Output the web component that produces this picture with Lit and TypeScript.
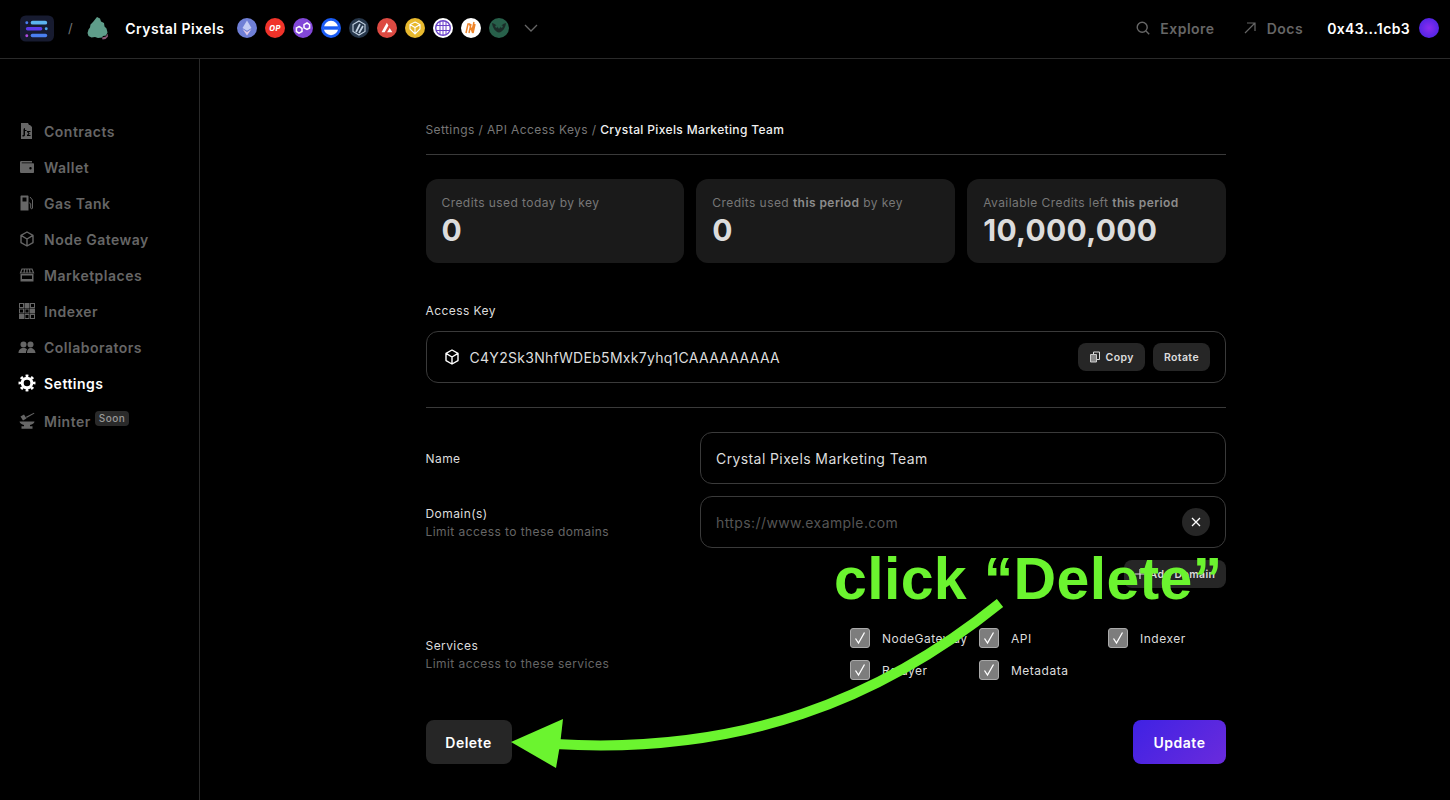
import { LitElement, html, css, svg } from 'lit';
import { customElement } from 'lit/decorators.js';

const navIcons: Record<string, unknown> = {
  contracts: svg`<path fill="currentColor" fill-rule="evenodd" d="M3 1h7l1 2h1l2 2v12H3zM7 6c-1 0-1.500.8-1.500 2v5H4.500v1.500h1c1 0 1.500-.8 1.500-2V9h1.500V8H7zm2 3v1l1.500 1.500L9 13v1h3.500v-1h-2l1.200-1.500L10.500 10h2V9z"/>`,
  wallet: svg`<path fill="currentColor" fill-rule="evenodd" d="M3.500 3H14v1.500H4c-.4 0-.4.800 0 .800h11c.6 0 1 .4 1 1V14c0 .6-.4 1-1 1H3.500C2.500 15 2 14.500 2 13.500V4.500C2 3.500 2.500 3 3.500 3zM12.500 9a1.200 1.200 0 1 0 0 2.400 1.200 1.200 0 0 0 0-2.400z"/>`,
  gas: svg`<path fill="currentColor" fill-rule="evenodd" d="M3.500 1.500h6c.6 0 1 .4 1 1V16.500h-8V2.500c0-.6.4-1 1-1zM4.500 3.500v4h4v-4z"/><path fill="none" stroke="currentColor" d="M12 3l2.500 3v8c0 1-1.800 1-1.800 0v-4c0-.8-.7-1-1.500-1"/>`,
  cube: svg`<path fill="none" stroke="currentColor" stroke-width="1.400" stroke-linejoin="round" d="M9 2l6 3.400v7.200L9 16l-6-3.400V5.400zM3 5.400L9 9l6-3.600M9 9v7"/>`,
  store: svg`<path fill="none" stroke="currentColor" stroke-width="1.200" d="M4 3h10l1.500 4h-13zM6.500 3L6 7M9 3v4M11.500 3l.5 4"/><path fill="currentColor" d="M2.500 8H15.500V15.500H2.500zM4 9.500V13H14V9.500z" fill-rule="evenodd"/>`,
  grid: svg`<g fill="none" stroke="currentColor"><rect x="1.500" y="1.500" width="4" height="4"/><rect x="7" y="1.500" width="4" height="4" fill="currentColor"/><rect x="12.500" y="1.500" width="4" height="4"/><rect x="1.500" y="7" width="4" height="4"/><rect x="7" y="7" width="4" height="4"/><rect x="12.500" y="7" width="4" height="4" fill="currentColor"/><rect x="1.500" y="12.500" width="4" height="4" fill="currentColor"/><rect x="7" y="12.500" width="4" height="4"/><rect x="12.500" y="12.500" width="4" height="4"/></g>`,
  users: svg`<g fill="currentColor"><circle cx="5.500" cy="6.500" r="3"/><circle cx="12.500" cy="6.500" r="3"/><path d="M0.500 15c0-3 2-5 5-5 1.500 0 2.700.5 3.500 1.400-.7.900-1 2.200-1 3.600zM9 15c0-3 1.300-5 3.500-5s5 2 5 5z"/></g>`,
  gear: svg`<g fill="none" stroke="currentColor"><circle cx="9" cy="9" r="4.800" stroke-width="3"/><circle cx="9" cy="9" r="7.200" stroke-width="2.600" pathLength="16" stroke-dasharray="1 1" stroke-dashoffset="0.500"/></g>`,
  anvil: svg`<path fill="currentColor" d="M2.500 4.500L6 2.500l2.500 4-3.500 2zM8 4.800L16 .8l.4.7L8.600 6zM1.500 9.500h15c0 2-2.500 3.200-4.500 3.400v1.300h2.500V16.800h-11v-2.600H6v-1.300C4 12.700 1.700 11.500 1.500 9.500z"/>`,
};

const navItems = [
  { label: 'Contracts', icon: 'contracts' },
  { label: 'Wallet', icon: 'wallet' },
  { label: 'Gas Tank', icon: 'gas' },
  { label: 'Node Gateway', icon: 'cube' },
  { label: 'Marketplaces', icon: 'store' },
  { label: 'Indexer', icon: 'grid' },
  { label: 'Collaborators', icon: 'users' },
  { label: 'Settings', icon: 'gear', active: true },
  { label: 'Minter', icon: 'anvil', soon: true },
];

const chains = [
  svg`<circle cx="10" cy="10" r="10" fill="#6f7fd6"/><path d="M10 2.500l4.500 7.600L10 12.800 5.500 10.100z" fill="#c3ccf5"/><path d="M10 14l4.500-2.900L10 17.500l-4.500-6.400z" fill="#dfc9e8"/>`,
  svg`<circle cx="10" cy="10" r="10" fill="#f0332a"/><text x="10" y="12.800" font-size="7.500" font-weight="800" font-style="italic" text-anchor="middle" fill="#fff" font-family="Inter">OP</text>`,
  svg`<circle cx="10" cy="10" r="10" fill="#8247d8"/><path d="M6 8.500l3 1.800v3.200l-3 1.700-2.600-1.700V10zM14 5l2.600 1.700v3.300L14 11.500l-3-1.600V6.700z" fill="none" stroke="#fff" stroke-width="1.500"/>`,
  svg`<circle cx="10" cy="10" r="10" fill="#1a5cf5"/><circle cx="10" cy="10" r="7.200" fill="#fff"/><rect x="3" y="8.300" width="14" height="3.400" fill="#1a5cf5"/>`,
  svg`<circle cx="10" cy="10" r="10" fill="#26374b"/><path d="M10 3l6 3.500v7L10 17l-6-3.500v-7z" fill="none" stroke="#c4d3e3" stroke-width="1.100"/><path d="M7 14l4-8M10 15l4-7" stroke="#c4d3e3" stroke-width="1.700"/>`,
  svg`<circle cx="10" cy="10" r="10" fill="#dd4a42"/><path d="M9.800 4.800l1.600 2.800-3.700 6.700H4.500zM12.700 10l2.700 4.300h-5.300z" fill="#fff"/>`,
  svg`<circle cx="10" cy="10" r="10" fill="#e8b92e"/><path d="M10 4l5 2.500v4.500L10 16l-5-5V6.500zM5 6.500l5 3 5-3M10 9.500V16" fill="none" stroke="#fff" stroke-width="1.100"/>`,
  svg`<circle cx="10" cy="10" r="10" fill="#fff"/><circle cx="10" cy="10" r="7.300" fill="none" stroke="#6a43c9" stroke-width="1.400"/><path d="M3 7.500h14M3 12.500h14M7 3v14M10 3v14M13 3v14" stroke="#6a43c9" stroke-width="1"/>`,
  svg`<circle cx="10" cy="10" r="10" fill="#fff"/><path d="M5 15l2-9h1.500L11 13l2-9M8 15l2-9M12 15l2-9" fill="none" stroke="#ee8429" stroke-width="1.500"/>`,
  svg`<circle cx="10" cy="10" r="10" fill="#27604a"/><path d="M3 5c3 .3 5.500 3 7 6 1.500-3 4-5.700 7-6-.5 5-3.500 9-7 9.500C6.500 14 3.500 10 3 5z" fill="#1b2c28"/><circle cx="7.500" cy="8.500" r="1.200" fill="#27604a"/><circle cx="12.500" cy="8.500" r="1.200" fill="#27604a"/>`,
];

const services = ['NodeGateway', 'API', 'Indexer', 'Relayer', 'Metadata'];

@customElement('app-root')
export class AppRoot extends LitElement {
  static styles = css`
    :host {
      display: block;
      position: relative;
      width: 1450px;
      height: 800px;
      overflow: hidden;
      background: #000;
      color: #fff;
      font-family: Inter, 'Liberation Sans', sans-serif;
      font-size: 12px;
      letter-spacing: 0.43px;
    }
    svg { display: block; flex: none; }

    .top {
      display: flex;
      align-items: center;
      height: 56px;
      padding: 0 10px 2px 20px;
      border-bottom: 1px solid #2a2a2a;
    }
    .slash { margin: 0 13px 0 14px; color: #777; font-size: 13px; }
    .project { font-size: 14px; font-weight: 600; margin: 0 13px 0 15px; letter-spacing: 0.5px; }
    .chains { display: flex; gap: 8px; }
    .chevron { margin-left: 14px; color: #666; }
    .spacer { flex: 1; }
    .toplink {
      display: flex;
      align-items: center;
      gap: 10px;
      font-size: 14px;
      font-weight: 600;
      letter-spacing: 0.5px;
      color: #666;
      margin-right: 28px;
    }
    .toplink.last { margin-right: 24px; }
    .addr { font-size: 14px; font-weight: 600; letter-spacing: 0.35px; }
    .avatar {
      width: 20px;
      height: 20px;
      margin-left: 9px;
      margin-right: 1px;
      border-radius: 50%;
      background: radial-gradient(circle at 50% 50%, #8a2cf0, #3d22e0);
    }

    .body { display: flex; height: 741px; }
    .side {
      width: 199px;
      border-right: 1px solid #2a2a2a;
      padding-top: 54px;
    }
    .nav {
      display: flex;
      align-items: center;
      gap: 8px;
      height: 36px;
      padding-left: 18px;
      font-size: 14px;
      font-weight: 600;
      letter-spacing: 0.5px;
      color: #666;
    }
    .nav.active { color: #fff; }
    .nav.minter { height: 40px; }
    .soon {
      align-self: flex-start;
      margin: 10px 0 0 -4px;
      padding: 0 4px;
      height: 15px;
      line-height: 15px;
      font-size: 10px;
      font-weight: 500;
      color: #999;
      background: #2a2a2a;
      border-radius: 4px;
    }

    .main { width: 800.5px; margin-left: 225.5px; padding-top: 61px; }
    .crumbs {
      height: 19px;
      line-height: 19px;
      color: #777;
      padding-bottom: 15px;
      margin-bottom: 24px;
      border-bottom: 1px solid #3a3a3a;
      letter-spacing: 0.4px;
    }
    .crumbs b { color: #f0f0f0; font-weight: 500; letter-spacing: 0.36px; }
    .cards { display: grid; grid-template-columns: repeat(3, 1fr); gap: 12px; margin-bottom: 40px; }
    .card {
      height: 84px;
      box-sizing: border-box;
      padding: 16px;
      background: #1a1a1a;
      border-radius: 12px;
      color: #777;
      line-height: 15px;
    }
    .card b { font-weight: 600; color: #8c8c8c; }
    .num {
      color: #dcdcdc;
      font-size: 30px;
      font-weight: 700;
      line-height: 36px;
      margin-top: 2px;
      letter-spacing: 0.3px;
    }
    .label { color: #ddd; line-height: 15px; }
    .hint { color: #666; line-height: 15px; margin-top: 3px; }
    .keybox {
      display: flex;
      align-items: center;
      height: 52px;
      box-sizing: border-box;
      margin: 13px 0 24px;
      padding: 0 15px 0 16px;
      border: 1px solid #3a3a3a;
      border-radius: 12px;
      font-size: 14px;
      letter-spacing: 0.29px;
      color: #ddd;
    }
    .keybox svg.keyicon { margin-right: 9px; }
    .small {
      display: flex;
      align-items: center;
      gap: 5px;
      height: 28px;
      padding: 0 11px;
      margin-left: 8px;
      background: #262626;
      border-radius: 8px;
      font-size: 10.500px;
      font-weight: 600;
      letter-spacing: 0.4px;
      color: #ddd;
    }
    .rule { border-top: 1px solid #3a3a3a; margin-bottom: 24px; }

    .row { display: grid; grid-template-columns: 274.5px 526px; margin-bottom: 12px; }
    .row > .left { align-self: center; }
    .field {
      display: flex;
      align-items: center;
      justify-content: space-between;
      height: 52px;
      box-sizing: border-box;
      padding: 0 15px;
      border: 1px solid #3a3a3a;
      border-radius: 12px;
      font-size: 14px;
      letter-spacing: 0.4px;
      color: #ddd;
    }
    .ph { color: #555; }
    .clear {
      display: flex;
      align-items: center;
      justify-content: center;
      width: 28px;
      height: 28px;
      border-radius: 50%;
      background: #262626;
    }
    .addwrap { display: flex; justify-content: flex-end; }
    .add { margin: 0; width: 102px; box-sizing: border-box; justify-content: center; padding: 0; }
    .svc { margin-top: 40px; margin-bottom: 0; align-items: center; }
    .checks {
      display: grid;
      grid-template-columns: repeat(3, 129px);
      row-gap: 12px;
      margin-left: 150px;
    }
    .check { display: flex; align-items: center; gap: 12px; height: 20px; color: #ddd; white-space: nowrap; letter-spacing: 0.5px; }
    .box {
      width: 18px;
      height: 18px;
      border: 1px solid #aaa;
      border-radius: 3px;
      background: #7d7d7d;
      display: flex;
      align-items: center;
      justify-content: center;
    }
    .actions { display: flex; justify-content: space-between; margin-top: 40px; }
    .btn {
      display: flex;
      align-items: center;
      justify-content: center;
      height: 44px;
      border-radius: 8px;
      font-size: 14px;
      font-weight: 600;
      letter-spacing: 0.5px;
    }
    .del { width: 86px; background: #262626; }
    .upd { width: 93px; background: linear-gradient(135deg, #3f22e4, #6a2bdc); }

    /* annotation drawn on top of the screenshot */
    .note {
      position: absolute;
      left: 834px;
      top: 546px;
      font-family: 'Liberation Sans', Arial, sans-serif;
      font-weight: 700;
      font-size: 59px;
      line-height: 66px;
      letter-spacing: 0.35px;
      word-spacing: 0;
      color: #6bf42f;
      white-space: nowrap;
    }
    .arrow { position: absolute; left: 0; top: 0; pointer-events: none; }
  `;

  private renderNav(item: (typeof navItems)[number]) {
    return html`
      <div class="nav ${item.active ? 'active' : ''} ${item.soon ? 'minter' : ''}">
        <svg width="18" height="18" viewBox="0 0 18 18">${navIcons[item.icon]}</svg>
        <span>${item.label}</span>
        ${item.soon ? html`<span class="soon">Soon</span>` : ''}
      </div>
    `;
  }

  render() {
    return html`
      <div class="top">
        <svg width="34" height="27" viewBox="0 0 35 27">
          <rect width="35" height="27" rx="6" fill="#171b30"/>
          <circle cx="7" cy="7.500" r="1.500" fill="#4a7ff0"/>
          <rect x="11" y="5.500" width="17" height="4" rx="2" fill="#5cb4ef"/>
          <rect x="6" y="12" width="17" height="3.500" rx="1.700" fill="#5b3bea"/>
          <circle cx="27" cy="13.700" r="1.500" fill="#4fa5e8"/>
          <circle cx="7" cy="21" r="1.500" fill="#b04be0"/>
          <rect x="11" y="19" width="17" height="3.500" rx="1.700" fill="#4a7ff0"/>
        </svg>
        <span class="slash">/</span>
        <svg width="24" height="24" viewBox="0 0 24 24">
          <path d="M11 1l3 1.500 1 3 3 1.500.5 3.500 2 2 1 4-1.500 3-3 .5-1 1.500-4 .5-3-1-3.500.5-3-1.500-1-3 1-3.500 1.500-2 .5-3 2.500-2.500z" fill="#5f9d8a"/>
          <path d="M16 21.500l4-1 1.500-3 .5 3-2.500 2.500-3 .5z" fill="#8c5a78"/>
        </svg>
        <span class="project">Crystal Pixels</span>
        <div class="chains">
          ${chains.map((c) => html`<svg width="20" height="20" viewBox="0 0 20 20">${c}</svg>`)}
        </div>
        <svg class="chevron" width="16" height="16" viewBox="0 0 16 16">
          <path d="M2 5l6 6 6-6" fill="none" stroke="currentColor" stroke-width="1.300"/>
        </svg>
        <div class="spacer"></div>
        <div class="toplink">
          <svg width="14" height="14" viewBox="0 0 14 14">
            <circle cx="6.200" cy="6.200" r="5" fill="none" stroke="currentColor" stroke-width="1.400"/>
            <path d="M10 10l3.200 3.200" stroke="currentColor" stroke-width="1.400"/>
          </svg>
          Explore
        </div>
        <div class="toplink last">
          <svg width="14" height="14" viewBox="0 0 14 14">
            <path d="M2 12L12 2M4 2h8v8" fill="none" stroke="currentColor" stroke-width="1.200"/>
          </svg>
          Docs
        </div>
        <span class="addr">0x43...1cb3</span>
        <div class="avatar"></div>
      </div>

      <div class="body">
        <aside class="side">${navItems.map((n) => this.renderNav(n))}</aside>
        <main class="main">
          <div class="crumbs">Settings / API Access Keys / <b>Crystal Pixels Marketing Team</b></div>
          <div class="cards">
            <div class="card">Credits used today by key<div class="num">0</div></div>
            <div class="card">Credits used <b>this period</b> by key<div class="num">0</div></div>
            <div class="card">Available Credits left <b>this period</b><div class="num">10,000,000</div></div>
          </div>

          <div class="label">Access Key</div>
          <div class="keybox">
            <svg class="keyicon" width="18" height="18" viewBox="0 0 18 18">
              <path fill="none" stroke="#fff" stroke-width="1.400" stroke-linejoin="round" d="M9 2l6 3.400v7.200L9 16l-6-3.400V5.400zM3 5.400L9 9l6-3.600M9 9v7"/>
            </svg>
            <span>C4Y2Sk3NhfWDEb5Mxk7yhq1CAAAAAAAAA</span>
            <div class="spacer"></div>
            <div class="small">
              <svg width="12" height="12" viewBox="0 0 12 12">
                <path d="M1.500 3.500h6v7.500h-6z" fill="#888" stroke="#ccc"/>
                <path d="M4.500 3V1h6v7.500H8" fill="none" stroke="#ddd"/>
              </svg>
              Copy
            </div>
            <div class="small">Rotate</div>
          </div>
          <div class="rule"></div>

          <div class="row">
            <div class="left"><div class="label">Name</div></div>
            <div class="field">Crystal Pixels Marketing Team</div>
          </div>
          <div class="row">
            <div class="left">
              <div class="label">Domain(s)</div>
              <div class="hint">Limit access to these domains</div>
            </div>
            <div class="field">
              <span class="ph">https://www.example.com</span>
              <div class="clear">
                <svg width="10" height="10" viewBox="0 0 10 10">
                  <path d="M1 1l8 8M9 1l-8 8" stroke="#fff" stroke-width="1.300"/>
                </svg>
              </div>
            </div>
          </div>
          <div class="addwrap">
            <div class="small add">
              <svg width="10" height="10" viewBox="0 0 10 10">
                <path d="M5 0v10M0 5h10" stroke="#ddd" stroke-width="1.200"/>
              </svg>
              Add Domain
            </div>
          </div>
          <div class="row svc">
            <div class="left">
              <div class="label">Services</div>
              <div class="hint">Limit access to these services</div>
            </div>
            <div class="checks">
              ${services.map(
                (s) => html`
                  <div class="check">
                    <div class="box">
                      <svg width="14" height="14" viewBox="0 0 14 14">
                        <path d="M2.500 7.500l3 4.500L11.500 1.500" fill="none" stroke="#fff" stroke-width="1.300"/>
                      </svg>
                    </div>
                    ${s}
                  </div>
                `
              )}
            </div>
          </div>
          <div class="actions">
            <div class="btn del">Delete</div>
            <div class="btn upd">Update</div>
          </div>
        </main>
      </div>

      <div class="note">click “Delete”</div>
      <svg class="arrow" width="1450" height="800" viewBox="0 0 1450 800">
        <path d="M1000 603C880 700 740 755 555 744" fill="none" stroke="#6bf42f" stroke-width="10"/>
        <path d="M511 742L563 719L560 745L556 768z" fill="#6bf42f"/>
      </svg>
    `;
  }
}
